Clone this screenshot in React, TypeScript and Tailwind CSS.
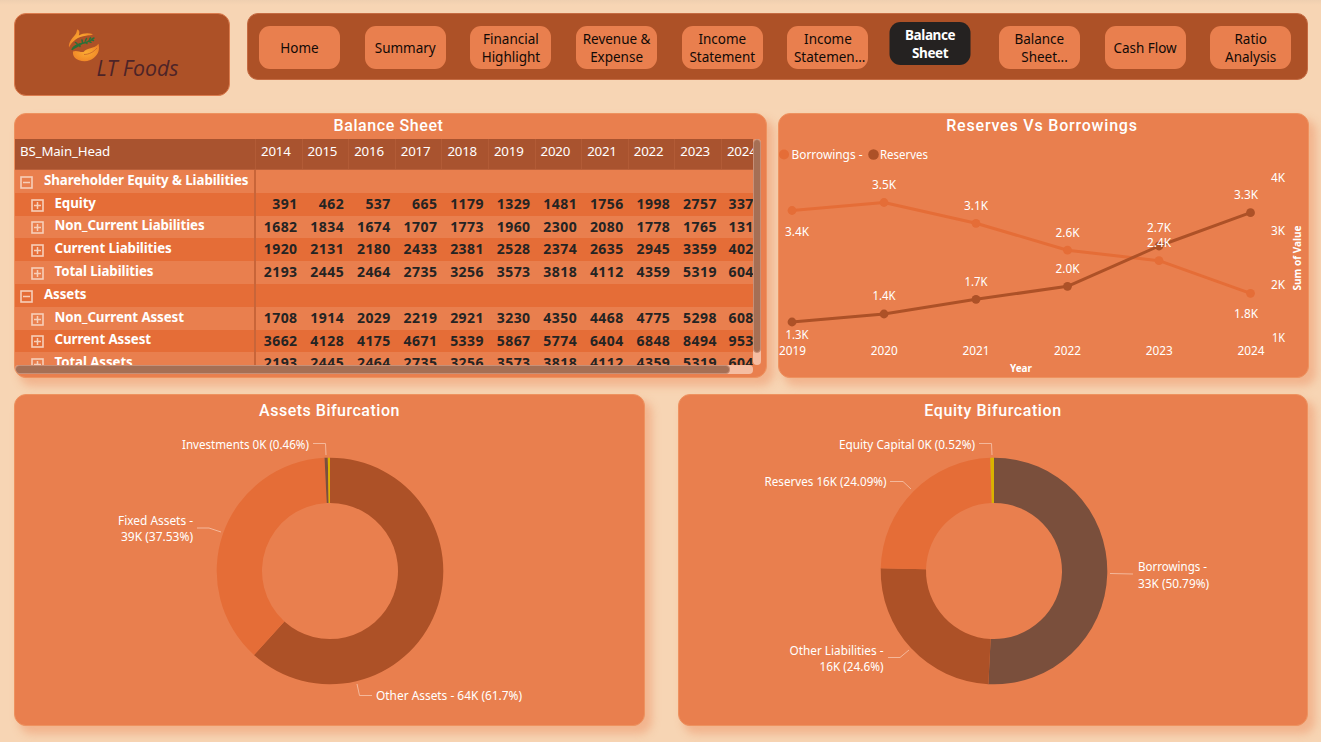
import React from "react";

type NavItem = { lines: string[]; active?: boolean };

const nav: NavItem[] = [
  { lines: ["Home"] },
  { lines: ["Summary"] },
  { lines: ["Financial", "Highlight"] },
  { lines: ["Revenue &", "Expense"] },
  { lines: ["Income", "Statement"] },
  { lines: ["Income", "\u00a0Statemen..."] },
  { lines: ["Balance", "Sheet"], active: true },
  { lines: ["Balance", "\u00a0\u00a0\u00a0Sheet..."] },
  { lines: ["Cash Flow"] },
  { lines: ["Ratio", "Analysis"] },
];

const years = ["2014", "2015", "2016", "2017", "2018", "2019", "2020", "2021", "2022", "2023", "2024"];

type Row = { label: string; group?: boolean; values?: string[] };

const totals = ["2193", "2445", "2464", "2735", "3256", "3573", "3818", "4112", "4359", "5319", "604"];

const rows: Row[] = [
  { label: "Shareholder Equity & Liabilities", group: true },
  { label: "Equity", values: ["391", "462", "537", "665", "1179", "1329", "1481", "1756", "1998", "2757", "337"] },
  { label: "Non_Current Liabilities", values: ["1682", "1834", "1674", "1707", "1773", "1960", "2300", "2080", "1778", "1765", "131"] },
  { label: "Current Liabilities", values: ["1920", "2131", "2180", "2433", "2381", "2528", "2374", "2635", "2945", "3359", "402"] },
  { label: "Total Liabilities", values: totals },
  { label: "Assets", group: true },
  { label: "Non_Current Assest", values: ["1708", "1914", "2029", "2219", "2921", "3230", "4350", "4468", "4775", "5298", "608"] },
  { label: "Current Assest", values: ["3662", "4128", "4175", "4671", "5339", "5867", "5774", "6404", "6848", "8494", "953"] },
  { label: "Total Assets", values: totals },
];

function Card({
  title,
  className,
  titleClass,
  children,
}: {
  title: string;
  className: string;
  titleClass: string;
  children: React.ReactNode;
}) {
  return (
    <section
      className={`flex flex-col overflow-hidden rounded-[12px] border border-[#ee925f] bg-[#e97f4e] shadow-[6px_7px_9px_1px_rgba(233,127,78,0.38)] ${className}`}
    >
      <h2 className={`h-[25px] shrink-0 text-center font-['Roboto',sans-serif] text-[16px] font-medium text-white ${titleClass}`}>
        {title}
      </h2>
      {children}
    </section>
  );
}

function Toggle({ open }: { open?: boolean }) {
  return (
    <svg className="mt-[2px] h-[13px] w-[13px] shrink-0" viewBox="0 0 13 13" fill="none" stroke="#f7cfb9">
      <rect x="1" y="1" width="11" height="11" strokeWidth="1.6" />
      <path d={open ? "M3 6.5h7" : "M3 6.5h7M6.5 3v7"} strokeWidth="1.5" />
    </svg>
  );
}

function Label({
  x,
  y,
  w,
  anchor = "start",
  bold,
  children,
}: {
  x: number;
  y: number;
  w: number;
  anchor?: "start" | "middle" | "end";
  bold?: boolean;
  children: string;
}) {
  return (
    <text
      x={x}
      y={y}
      textAnchor={anchor}
      textLength={w}
      lengthAdjust="spacingAndGlyphs"
      fill="#fff"
      className={bold ? "text-[11px] font-bold" : "text-[12px]"}
    >
      {children}
    </text>
  );
}

function ring(cx: number, cy: number, from: number, to: number) {
  const outer = 113.3;
  const inner = 68;
  const at = (r: number, t: number) => {
    const a = t * Math.PI * 2;
    return `${cx + r * Math.sin(a)} ${cy - r * Math.cos(a)}`;
  };
  const big = to - from > 0.5 ? 1 : 0;
  return `M${at(outer, from)}A${outer} ${outer} 0 ${big} 1 ${at(outer, to)}L${at(inner, to)}A${inner} ${inner} 0 ${big} 0 ${at(inner, from)}Z`;
}

const borrowings: [number, number][] = [[792, 210.5], [884, 202.5], [976, 223.3], [1067.5, 250.2], [1159, 260.7], [1250.5, 293.3]];
const reserves: [number, number][] = [[792, 322], [884, 314], [976, 299.3], [1067.5, 286.3], [1159, 246], [1250.5, 212.7]];

function Series({ points, color }: { points: [number, number][]; color: string }) {
  return (
    <g>
      <polyline points={points.map((p) => p.join(",")).join(" ")} fill="none" stroke={color} strokeWidth="3" strokeLinejoin="round" />
      {points.map(([x, y]) => (
        <circle key={x} cx={x} cy={y} r="4.4" fill={color} />
      ))}
    </g>
  );
}

function Logo() {
  return (
    <svg className="h-full w-full" viewBox="15 14 214 81">
      <defs>
        <radialGradient id="hand" cx="0.5" cy="0.5" r="0.6">
          <stop offset="0" stopColor="#fbab32" />
          <stop offset="1" stopColor="#ef8226" />
        </radialGradient>
      </defs>
      <path d="M69 47.500C68 42 73.500 37 76 33.500C77 31.500 76.500 30.500 77.500 29.300C80 31 79.500 33 78.800 35.500C83 33 88.500 32.500 93 34.300C91 35.800 89 35 86 35.700C78 36.500 72 41 69 47.500Z" fill="url(#hand)" />
      <path d="M72 50C74 46 77 44.500 82 43.500C86 43 90 41 93 39" fill="none" stroke="#2b7038" strokeWidth="1.300" />
      <path d="M72 49.500C74 46 77 44.500 81 44C78 47 76 46.500 72 49.500ZM77 43.500L75.500 42.500M79.500 44L80 46.500M82.500 42.500L82 40M85 42L87 43.500M85.500 40.500L86.500 38.500M88.500 41L91 42.300M89.500 39.500L90.500 37.800M92 39L94 38M91.500 40L93.500 40.500" fill="#2b7038" stroke="#2b7038" strokeWidth="1.500" strokeLinecap="round" />
      <path d="M73 51.500C76.500 49.800 80 52.500 83.500 52C85 49.500 88.500 49 90.500 48.300C93.500 47.500 96.500 46.500 98.500 43.800C99.800 49.500 98.500 54 94 57.800C90 61.500 84 62 79 60.300C74.500 58.500 72.500 55.500 73 51.500Z" fill="url(#hand)" />
      <path d="M84 54.500C89 54.500 93.500 52 97 48" fill="none" stroke="#c8642a" strokeWidth="0.800" />
      <text x="96.500" y="76" textLength="82" lengthAdjust="spacingAndGlyphs" fill="#4d2428" className="font-['Open_Sans',sans-serif] text-[21px] italic">
        LT Foods
      </text>
    </svg>
  );
}

export default function App() {
  return (
    <div className="h-[742px] w-[1321px] overflow-hidden bg-[#f7d5b4] bg-[linear-gradient(#efcfb0,#f7d5b4_5px)] pt-[13px] pl-[14px] font-['Noto_Sans','Open_Sans',sans-serif]">
      <header className="flex items-start gap-[17px]">
        <div className="h-[83px] w-[216px] overflow-hidden rounded-[12px] border border-[#dc7c4e] bg-[#ad5127]">
          <Logo />
        </div>
        <nav className="flex h-[67px] w-[1061px] gap-[24.7px] rounded-[11px] border border-[#c56b42] bg-[#ad5127] pt-[12px] pl-[11px] text-[13.5px] leading-[18px] tracking-[-0.02px] text-[#120a06]">
          {nav.map((item, i) => (
            <button
              key={i}
              className={`flex h-[43px] w-[81px] shrink-0 flex-col items-center justify-center rounded-[11px] whitespace-pre ${
                item.active ? "-translate-x-[3.5px] -translate-y-[4px] bg-[#252221] font-bold tracking-[-0.4px] text-white" : "bg-[#e97f4e]"
              }`}
            >
              {item.lines.map((line) => (
                <span key={line}>{line}</span>
              ))}
            </button>
          ))}
        </nav>
      </header>

      <main className="mt-[17px] flex flex-col gap-[16px]">
        <div className="flex gap-[11px]">
          <Card title="Balance Sheet" titleClass="leading-[24px] tracking-[0.6px] pr-[4px]" className="h-[265px] w-[753px]">
            <div className="flex">
              <div className="h-[226px] w-[738px] overflow-hidden">
                <div className="flex h-[31px] w-[760px] border-b border-[#b9603a] bg-[#a9532f] pt-[3px] text-[13.3px] leading-[19px] text-white">
                  <div className="w-[240px] shrink-0 pl-[5px] tracking-[-0.15px]">BS_Main_Head</div>
                  {years.map((year) => (
                    <div key={year} className="-mt-[3px] w-[46.6px] shrink-0 border-l border-[#b25b36] pt-[3px] pl-[5px] tracking-[-0.2px]">
                      {year}
                    </div>
                  ))}
                </div>
                {rows.map((row, i) => (
                  <div key={row.label} className={`flex h-[22.8px] w-[760px] ${i % 2 ? "bg-[#e56d37]" : "bg-[#e97f4e]"}`}>
                    <div className={`flex w-[241px] shrink-0 items-center gap-[11px] border-r-2 border-[#c86539] ${row.group ? "pl-[5px]" : "pl-[15.5px]"}`}>
                      <Toggle open={row.group} />
                      <span className="-mt-[3px] text-[13.3px] leading-[20px] font-bold tracking-[-0.08px] whitespace-nowrap text-white">{row.label}</span>
                    </div>
                    {row.values?.map((value, j) => (
                      <div
                        key={j}
                        className={`-mt-[1px] w-[46.6px] shrink-0 text-[14px] leading-[23px] font-bold tracking-[0.45px] text-[#252423] ${
                          j === years.length - 1 ? "pl-[6.5px]" : "pr-[5px] text-right"
                        }`}
                      >
                        {value}
                      </div>
                    ))}
                  </div>
                ))}
              </div>
              <div className="h-[226px] w-[8px] rounded-[4px] bg-[#f5bda2]">
                <div className="h-[214px] w-[8px] rounded-[4px] border border-[#c79078] bg-[#a56f55]" />
              </div>
            </div>
            <div className="h-[9px] w-[738px] shrink-0 rounded-[4px] bg-[#f5bda2]">
              <div className="h-[9px] w-[715px] rounded-[4px] border border-[#c79078] bg-[#a56f55]" />
            </div>
          </Card>

          <Card title="Reserves Vs Borrowings" titleClass="leading-[24px] tracking-[0.8px] pr-[3px]" className="h-[265px] w-[531px]">
            <svg className="h-[238px] w-[529px]" viewBox="779 139 529 238">
              <circle cx="784" cy="154.500" r="5" fill="#e56d37" />
              <circle cx="873.500" cy="154.500" r="5.300" fill="#ad5127" />
              <Label x={791.5} y={159} w={71}>Borrowings -</Label>
              <Label x={880} y={159} w={48}>Reserves</Label>
              <Series points={borrowings} color="#e56d37" />
              <Series points={reserves} color="#ad5127" />
              <Label x={797} y={236} w={24} anchor="middle">3.4K</Label>
              <Label x={884} y={189} w={24} anchor="middle">3.5K</Label>
              <Label x={976} y={210} w={24} anchor="middle">3.1K</Label>
              <Label x={1067.5} y={237} w={24} anchor="middle">2.6K</Label>
              <Label x={1159} y={232} w={24} anchor="middle">2.7K</Label>
              <Label x={1159} y={247} w={24} anchor="middle">2.4K</Label>
              <Label x={1246} y={199} w={24} anchor="middle">3.3K</Label>
              <Label x={1246} y={318} w={24} anchor="middle">1.8K</Label>
              <Label x={797} y={339} w={23} anchor="middle">1.3K</Label>
              <Label x={884} y={300} w={23} anchor="middle">1.4K</Label>
              <Label x={976} y={286} w={23} anchor="middle">1.7K</Label>
              <Label x={1067.5} y={273} w={24} anchor="middle">2.0K</Label>
              {["2019", "2020", "2021", "2022", "2023", "2024"].map((year, i) => (
                <Label key={year} x={792.5 + i * 91.7} y={355} w={27} anchor="middle">{year}</Label>
              ))}
              <Label x={1285} y={182} w={14} anchor="end">4K</Label>
              <Label x={1285} y={235} w={14} anchor="end">3K</Label>
              <Label x={1285} y={289} w={14} anchor="end">2K</Label>
              <Label x={1285} y={342} w={13} anchor="end">1K</Label>
              <Label x={1021} y={372} w={22} anchor="middle" bold>Year</Label>
              <g transform="translate(1301 258) rotate(-90)">
                <Label x={0} y={0} w={65} anchor="middle" bold>Sum of Value</Label>
              </g>
            </svg>
          </Card>
        </div>

        <div className="flex gap-[33px]">
          <Card title="Assets Bifurcation" titleClass="leading-[32px] tracking-[0.5px]" className="h-[332px] w-[631px]">
            <svg className="h-[305px] w-[629px]" viewBox="15 420 629 305">
              <path d={ring(330, 571, 0, 0.617)} fill="#ad5127" />
              <path d={ring(330, 571, 0.617, 0.9923)} fill="#e56d37" />
              <path d={ring(330, 571, 0.9923, 0.9969)} fill="#7a4f3c" />
              <path d={ring(330, 571, 0.9969, 1)} fill="#d9b300" />
              <g fill="none" stroke="#f4b89b">
                <path d="M313 443.500H325.500L326 455" />
                <path d="M197 528H209L221 532" />
                <path d="M357 684L359.500 695.500H372" />
              </g>
              <Label x={309} y={449} w={127} anchor="end">Investments 0K (0.46%)</Label>
              <Label x={193} y={525} w={75} anchor="end">Fixed Assets -</Label>
              <Label x={193} y={541} w={72} anchor="end">39K (37.53%)</Label>
              <Label x={376} y={700} w={146}>Other Assets - 64K (61.7%)</Label>
            </svg>
          </Card>

          <Card title="Equity Bifurcation" titleClass="leading-[32px] tracking-[0.6px]" className="h-[332px] w-[630px]">
            <svg className="h-[305px] w-[628px]" viewBox="679 420 628 305">
              <path d={ring(994, 571, 0, 0.5079)} fill="#7a4f3c" />
              <path d={ring(994, 571, 0.5079, 0.7539)} fill="#ad5127" />
              <path d={ring(994, 571, 0.7539, 0.9948)} fill="#e56d37" />
              <path d={ring(994, 571, 0.9948, 1)} fill="#d9b300" />
              <g fill="none" stroke="#f4b89b">
                <path d="M979 443.500H991.500L992 455" />
                <path d="M890 481.500H903L911 489" />
                <path d="M888 657.500H900L909 650" />
                <path d="M1110 573.500L1133 574" />
              </g>
              <Label x={975} y={449} w={136} anchor="end">Equity Capital 0K (0.52%)</Label>
              <Label x={886.5} y={486} w={122} anchor="end">Reserves 16K (24.09%)</Label>
              <Label x={883.5} y={655} w={94} anchor="end">Other Liabilities -</Label>
              <Label x={883.5} y={671} w={64} anchor="end">16K (24.6%)</Label>
              <Label x={1138} y={571} w={69}>Borrowings -</Label>
              <Label x={1138} y={588} w={71}>33K (50.79%)</Label>
            </svg>
          </Card>
        </div>
      </main>
    </div>
  );
}
